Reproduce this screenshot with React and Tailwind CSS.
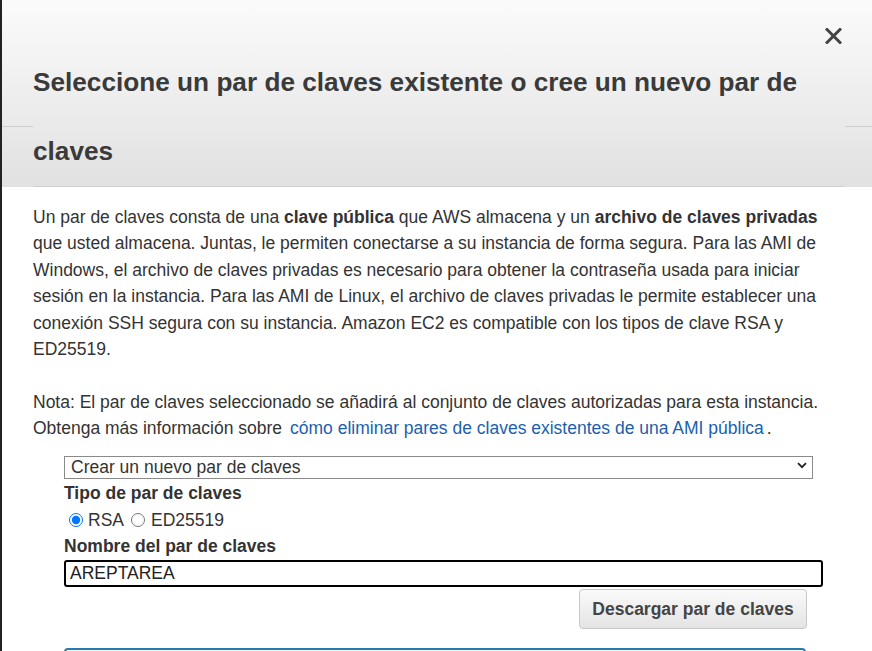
import React, { useState } from "react";

const CloseIcon = () => (
  <svg width="17" height="16" viewBox="0 0 17 16" fill="none">
    <path d="M2 1.5L15 14.5M15 1.5L2 14.5" stroke="#444" strokeWidth="3" strokeLinecap="square" />
  </svg>
);

const Chevron = () => (
  <svg width="10" height="7" viewBox="0 0 10 7" fill="none">
    <path d="M1 1.2L5 5.2L9 1.2" stroke="#222" strokeWidth="1.8" />
  </svg>
);

export default function App() {
  const [keyType, setKeyType] = useState("rsa");
  const [keyName, setKeyName] = useState("AREPTAREA");

  return (
    <div
      className="h-[651px] overflow-hidden bg-white border-l-2 border-[#222] text-[#333]"
      style={{ fontFamily: '"Liberation Sans", Arial, sans-serif' }}
    >
      {/* header */}
      <div className="grid grid-cols-[31px_1fr_27px] bg-gradient-to-b from-[#fbfbfb] to-[#e1e1e1]">
        <div className="h-[127px] border-b border-[#cfcfcf]" />
        <div className="border-b border-[#cfcfcf]">
          <div className="h-[48px] flex justify-end items-start pt-[28px] pr-[3px]">
            <button className="leading-none">
              <CloseIcon />
            </button>
          </div>
          <h2 className="text-[26.2px] font-bold leading-[69px] text-[#3a3a3a]">
            Seleccione un par de claves existente o cree un nuevo par de claves
          </h2>
        </div>
        <div className="h-[127px] border-b border-[#cfcfcf]" />
      </div>

      {/* body */}
      <div className="pl-[31px] pr-[27px] pt-[17px] text-[17.5px] leading-[26.4px]">
        <p>
          Un par de claves consta de una <b>clave pública</b> que AWS almacena y un{" "}
          <b>archivo de claves privadas</b> que usted almacena. Juntas, le permiten conectarse a su
          instancia de forma segura. Para las AMI de Windows, el archivo de claves privadas es
          necesario para obtener la contraseña usada para iniciar sesión en la instancia. Para las AMI
          de Linux, el archivo de claves privadas le permite establecer una conexión SSH segura con su
          instancia. Amazon EC2 es compatible con los tipos de clave RSA y ED25519.
        </p>
        <p className="mt-[26.4px]">
          Nota: El par de claves seleccionado se añadirá al conjunto de claves autorizadas para esta
          instancia. Obtenga más información sobre
          <a href="#" className="ml-[8px] text-[#1b5fae]">
            cómo eliminar pares de claves existentes de una AMI pública
          </a>
          <span className="ml-[3px]">.</span>
        </p>

        <div className="pl-[31px] pr-[22px] mt-[12px]">
          <div className="relative w-[749px]">
            <select className="appearance-none w-full h-[23px] border border-[#8a8a8a] bg-white pl-[6px] text-[17.5px] text-[#333] outline-none leading-[21px]">
              <option>Crear un nuevo par de claves</option>
            </select>
            <span className="absolute right-[6px] top-[8px] pointer-events-none">
              <Chevron />
            </span>
          </div>

          <div className="font-bold leading-[27px]">Tipo de par de claves</div>
          <div className="h-[26px] flex items-center">
            <label className="flex items-center mr-[3px]">
              <input
                type="radio"
                name="keytype"
                checked={keyType === "rsa"}
                onChange={() => setKeyType("rsa")}
                className="w-[14px] h-[14px] ml-[5px] mr-[5px] accent-[#0075ff]"
              />
              RSA
            </label>
            <label className="flex items-center">
              <input
                type="radio"
                name="keytype"
                checked={keyType === "ed"}
                onChange={() => setKeyType("ed")}
                className="w-[14px] h-[14px] ml-[4px] mr-[6px] accent-[#0075ff]"
              />
              ED25519
            </label>
          </div>

          <div className="font-bold leading-[27px]">Nombre del par de claves</div>
          <input
            type="text"
            value={keyName}
            onChange={(e) => setKeyName(e.target.value)}
            className="w-[759px] h-[27px] border-2 border-black rounded-[3px] px-[4px] text-[17.5px] text-[#222] outline-none"
          />
          <div className="flex justify-end w-[743px] mt-[2px]">
            <button className="w-[228px] h-[40px] rounded-[4px] border border-[#c8c8c8] bg-gradient-to-b from-[#fafafa] to-[#e4e4e4] font-bold text-[17.5px] text-[#444]">
              Descargar par de claves
            </button>
          </div>

          <div className="mt-[19px] w-[742px] h-[60px] rounded-[4px] border-2 border-[#2a7ab0] bg-[#f1faff]" />
        </div>
      </div>
    </div>
  );
}
